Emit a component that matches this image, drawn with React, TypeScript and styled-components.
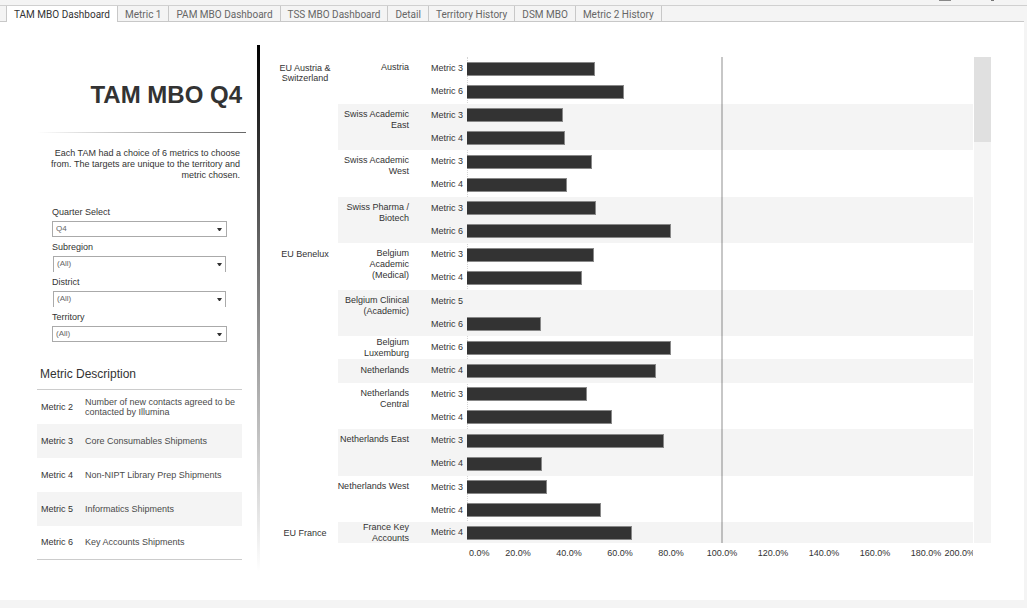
import React from "react";
import styled, { createGlobalStyle } from "styled-components";

const GlobalStyle = createGlobalStyle`
  *, *::before, *::after { box-sizing: border-box; }
  html, body { margin: 0; padding: 0; }
  body {
    background: #f4f4f4;
    color: #333;
    font: 9px/11px "Liberation Sans", Arial, sans-serif;
  }
`;

const Page = styled.div`
  display: flex;
  flex-direction: column;
  min-height: 100vh;
  padding-bottom: 8px;
`;

const Toolbar = styled.header`
  display: flex;
  justify-content: flex-end;
  height: 6px;
  padding-right: 32px;
  border-bottom: 1px solid #d0d0d0;

  svg { display: block; }
`;

const Tabs = styled.nav`
  display: flex;
  height: 16px;
  margin-right: 3px;
  padding-left: 6px;
  box-shadow: inset 0 -1px #c8c8c8;
`;

const Tab = styled.button<{ $active?: boolean }>`
  flex: none;
  height: 16px;
  padding: 0 7px;
  border: 0;
  border-right: 1px solid #c8c8c8;
  border-left: ${(p) => (p.$active ? "1px solid #c8c8c8" : "0")};
  background: ${(p) => (p.$active ? "#fff" : "transparent")};
  color: ${(p) => (p.$active ? "#333" : "#666")};
  font: 10px/15px Roboto, sans-serif;
  white-space: nowrap;
`;

const Dashboard = styled.main`
  display: flex;
  flex: 1;
  margin-right: 3px;
  padding: 23px 33px 28px 37px;
  background: #fff;
`;

const Sidebar = styled.aside`
  flex: none;
  width: 220px;
`;

const Title = styled.h1`
  margin: 0;
  padding: 35px 15px 0 0;
  font-size: 24px;
  line-height: 30px;
  text-align: right;
`;

const Rule = styled.hr`
  height: 1px;
  margin: 22px 11px 0 0;
  border: 0;
  background: linear-gradient(to right, #fff, #666);
`;

const Intro = styled.p`
  margin: 15px 17px 0 0;
  text-align: right;
  white-space: pre-line;
`;

const Filters = styled.form`
  display: flex;
  flex-direction: column;
  gap: 5px;
  margin: 26px 30px 0 15px;
`;

const Filter = styled.div`
  display: flex;
  flex-direction: column;
  gap: 3px;
`;

const SelectBox = styled.div<{ $open?: boolean }>`
  position: relative;
  height: 16px;
  margin: ${(p) => (p.$open ? "0 1px" : "0")};
  border: 1px solid #aaa;
  border-bottom-width: ${(p) => (p.$open ? "0" : "1px")};

  select {
    display: block;
    width: 100%;
    height: 14px;
    padding: 0 3px;
    border: 0;
    appearance: none;
    background: transparent;
    color: #666;
    font: 8px/14px "Liberation Sans", Arial, sans-serif;
  }

  svg {
    position: absolute;
    top: 6px;
    right: ${(p) => (p.$open ? "3px" : "4px")};
    pointer-events: none;
  }
`;

const SectionTitle = styled.h2`
  margin: 25px 0 7px 3px;
  font-size: 12px;
  font-weight: 400;
  line-height: 15px;
`;

const MetricTable = styled.table`
  width: 205px;
  border-collapse: collapse;
  border-top: 1px solid #ccc;
  border-bottom: 1px solid #ccc;

  tr { height: 34px; }
  tr:nth-child(even) { background: #f4f4f4; }
  th, td { padding: 0; font-weight: 400; text-align: left; line-height: 10px; }
  th { width: 48px; padding-left: 4px; }
  td { color: #4a4a4a; white-space: pre-line; }
`;

const Divider = styled.div`
  flex: none;
  width: 3px;
  background: linear-gradient(to bottom, #000, #9c9c9c 58%, #fff);
`;

const ChartPanel = styled.section`
  display: flex;
  flex: 1;
  flex-direction: column;
  min-width: 0;
  padding: 12px 0 13px 12px;
`;

const ChartBody = styled.div`
  display: flex;
  flex: 1;
  gap: 1px;
`;

const Plot = styled.div`
  display: grid;
  flex: 1;
  grid-template-columns: 66px 72px 57px 1fr;
  grid-template-rows: repeat(20, 1fr) 21px;
  min-width: 0;
`;

const Band = styled.div<{ $row: number; $span: number; $shaded: boolean }>`
  grid-column: 2 / 5;
  grid-row: ${(p) => p.$row} / span ${(p) => p.$span};
  background: ${(p) => (p.$shaded ? "#f4f4f4" : "transparent")};
`;

const Region = styled.div<{ $row: number; $span: number }>`
  grid-column: 1;
  grid-row: ${(p) => p.$row} / span ${(p) => p.$span};
  padding-top: 6px;
  line-height: 10px;
  text-align: center;
  white-space: pre;
`;

const District = styled.div<{ $row: number; $span: number }>`
  display: flex;
  align-items: ${(p) => (p.$span > 1 ? "flex-start" : "center")};
  justify-content: flex-end;
  grid-column: 2;
  grid-row: ${(p) => p.$row} / span ${(p) => p.$span};
  padding-top: ${(p) => (p.$span > 1 ? "5px" : "0")};
  padding-right: 1px;
  text-align: right;
  white-space: pre;
`;

const MetricLabel = styled.div<{ $row: number }>`
  align-self: center;
  grid-column: 3;
  grid-row: ${(p) => p.$row};
  padding-right: 4px;
  text-align: right;
`;

const Bar = styled.div<{ $row: number }>`
  align-self: center;
  grid-column: 4;
  grid-row: ${(p) => p.$row};
  height: 14px;
  border: 1px solid #888;
  border-left: 0;
  background: #333;
`;

const ZeroLine = styled.div`
  grid-column: 4;
  grid-row: 1 / -1;
  width: 1px;
  border-left: 1px dotted #d4d4d4;
`;

const TargetLine = styled.div`
  grid-column: 4;
  grid-row: 1 / -1;
  width: 2px;
  margin-left: 50.2%;
  background: rgba(0, 0, 0, 0.22);
`;

const ScrollTrack = styled.div`
  flex: none;
  width: 17px;
  background: #f4f4f4;
`;

const ScrollThumb = styled.div`
  height: 85px;
  background: #e0e0e0;
`;

const Axis = styled.div`
  display: grid;
  grid-template-columns: 51fr repeat(9, 102fr) 43fr;
  margin: 0 18px 0 195px;
  padding: 5px 0 0;
  overflow: hidden;
  text-align: center;
  white-space: nowrap;

  span { min-width: 0; }
  span:first-child { padding-left: 2px; text-align: left; }
  span:last-child { margin-left: -7px; text-align: left; }
`;

const tabs = [
  "TAM MBO Dashboard", "Metric 1", "PAM MBO Dashboard", "TSS MBO Dashboard",
  "Detail", "Territory History", "DSM MBO", "Metric 2 History",
];

const filters = [
  { id: "quarter", label: "Quarter Select", value: "Q4", open: false },
  { id: "subregion", label: "Subregion", value: "(All)", open: true },
  { id: "district", label: "District", value: "(All)", open: true },
  { id: "territory", label: "Territory", value: "(All)", open: false },
];

const metrics = [
  ["Metric 2", "Number of new contacts agreed to be\ncontacted by Illumina"],
  ["Metric 3", "Core Consumables Shipments"],
  ["Metric 4", "Non-NIPT Library Prep Shipments"],
  ["Metric 5", "Informatics Shipments"],
  ["Metric 6", "Key Accounts Shipments"],
];

type Group = { region?: string; district: string; rows: [number, number][] };

const groups: Group[] = [
  { region: "EU Austria &\nSwitzerland", district: "Austria", rows: [[3, 50], [6, 61.5]] },
  { district: "Swiss Academic\nEast", rows: [[3, 37.5], [4, 38.3]] },
  { district: "Swiss Academic\nWest", rows: [[3, 49.2], [4, 39.2]] },
  { district: "Swiss Pharma /\nBiotech", rows: [[3, 50.4], [6, 79.8]] },
  { region: "EU Benelux", district: "Belgium\nAcademic\n(Medical)", rows: [[3, 49.8], [4, 45.1]] },
  { district: "Belgium Clinical\n(Academic)", rows: [[5, 0], [6, 28.9]] },
  { district: "Belgium\nLuxemburg", rows: [[6, 80]] },
  { district: "Netherlands", rows: [[4, 74.1]] },
  { district: "Netherlands\nCentral", rows: [[3, 46.9], [4, 56.9]] },
  { district: "Netherlands East", rows: [[3, 77.4], [4, 29.3]] },
  { district: "Netherlands West", rows: [[3, 31.3], [4, 52.7]] },
  { region: "EU France", district: "France Key\nAccounts", rows: [[4, 64.7]] },
];

const AXIS_MAX = 198.4;
const ticks = Array.from({ length: 11 }, (_, i) => `${i * 20}.0%`);

function Chart() {
  let next = 1;
  return (
    <Plot>
      {groups.map((g, i) => {
        const start = next;
        const span = g.rows.length;
        next += span;
        return (
          <React.Fragment key={g.district}>
            <Band $row={start} $span={span} $shaded={i % 2 === 1} />
            {i === 0 && <ZeroLine />}
            {g.region && <Region $row={start} $span={span}>{g.region}</Region>}
            <District $row={start} $span={span}>{g.district}</District>
            {g.rows.map(([metric, value], j) => (
              <React.Fragment key={metric}>
                <MetricLabel $row={start + j}>Metric {metric}</MetricLabel>
                {value > 0 && (
                  <Bar $row={start + j} style={{ width: `${(value / AXIS_MAX) * 100}%` }} />
                )}
              </React.Fragment>
            ))}
          </React.Fragment>
        );
      })}
      <TargetLine />
    </Plot>
  );
}

export default function App() {
  return (
    <>
      <GlobalStyle />
      <Page>
        <Toolbar>
          <svg width="56" height="5" aria-hidden="true">
            <path d="M0 0h12v1H0z" fill="#888" />
            <path d="M52 0h3v1h-3z" fill="#777" />
          </svg>
        </Toolbar>
        <Tabs>
          {tabs.map((t, i) => (
            <Tab key={t} type="button" $active={i === 0}>{t}</Tab>
          ))}
        </Tabs>
        <Dashboard>
          <Sidebar>
            <Title>TAM MBO Q4</Title>
            <Rule />
            <Intro>
              {"Each TAM had a choice of 6 metrics to choose\nfrom. The targets are unique to the territory and\nmetric chosen."}
            </Intro>
            <Filters>
              {filters.map((f) => (
                <Filter key={f.id}>
                  <label htmlFor={f.id}>{f.label}</label>
                  <SelectBox $open={f.open}>
                    <select id={f.id} defaultValue={f.value}>
                      <option>{f.value}</option>
                    </select>
                    <svg width="5" height="3" aria-hidden="true">
                      <path d="M0 0h5L3 3H2z" fill="#333" />
                    </svg>
                  </SelectBox>
                </Filter>
              ))}
            </Filters>
            <SectionTitle>Metric Description</SectionTitle>
            <MetricTable>
              <tbody>
                {metrics.map(([name, text]) => (
                  <tr key={name}>
                    <th scope="row">{name}</th>
                    <td>{text}</td>
                  </tr>
                ))}
              </tbody>
            </MetricTable>
          </Sidebar>
          <Divider />
          <ChartPanel>
            <ChartBody>
              <Chart />
              <ScrollTrack>
                <ScrollThumb />
              </ScrollTrack>
            </ChartBody>
            <Axis>
              {ticks.map((t) => <span key={t}>{t}</span>)}
            </Axis>
          </ChartPanel>
        </Dashboard>
      </Page>
    </>
  );
}
